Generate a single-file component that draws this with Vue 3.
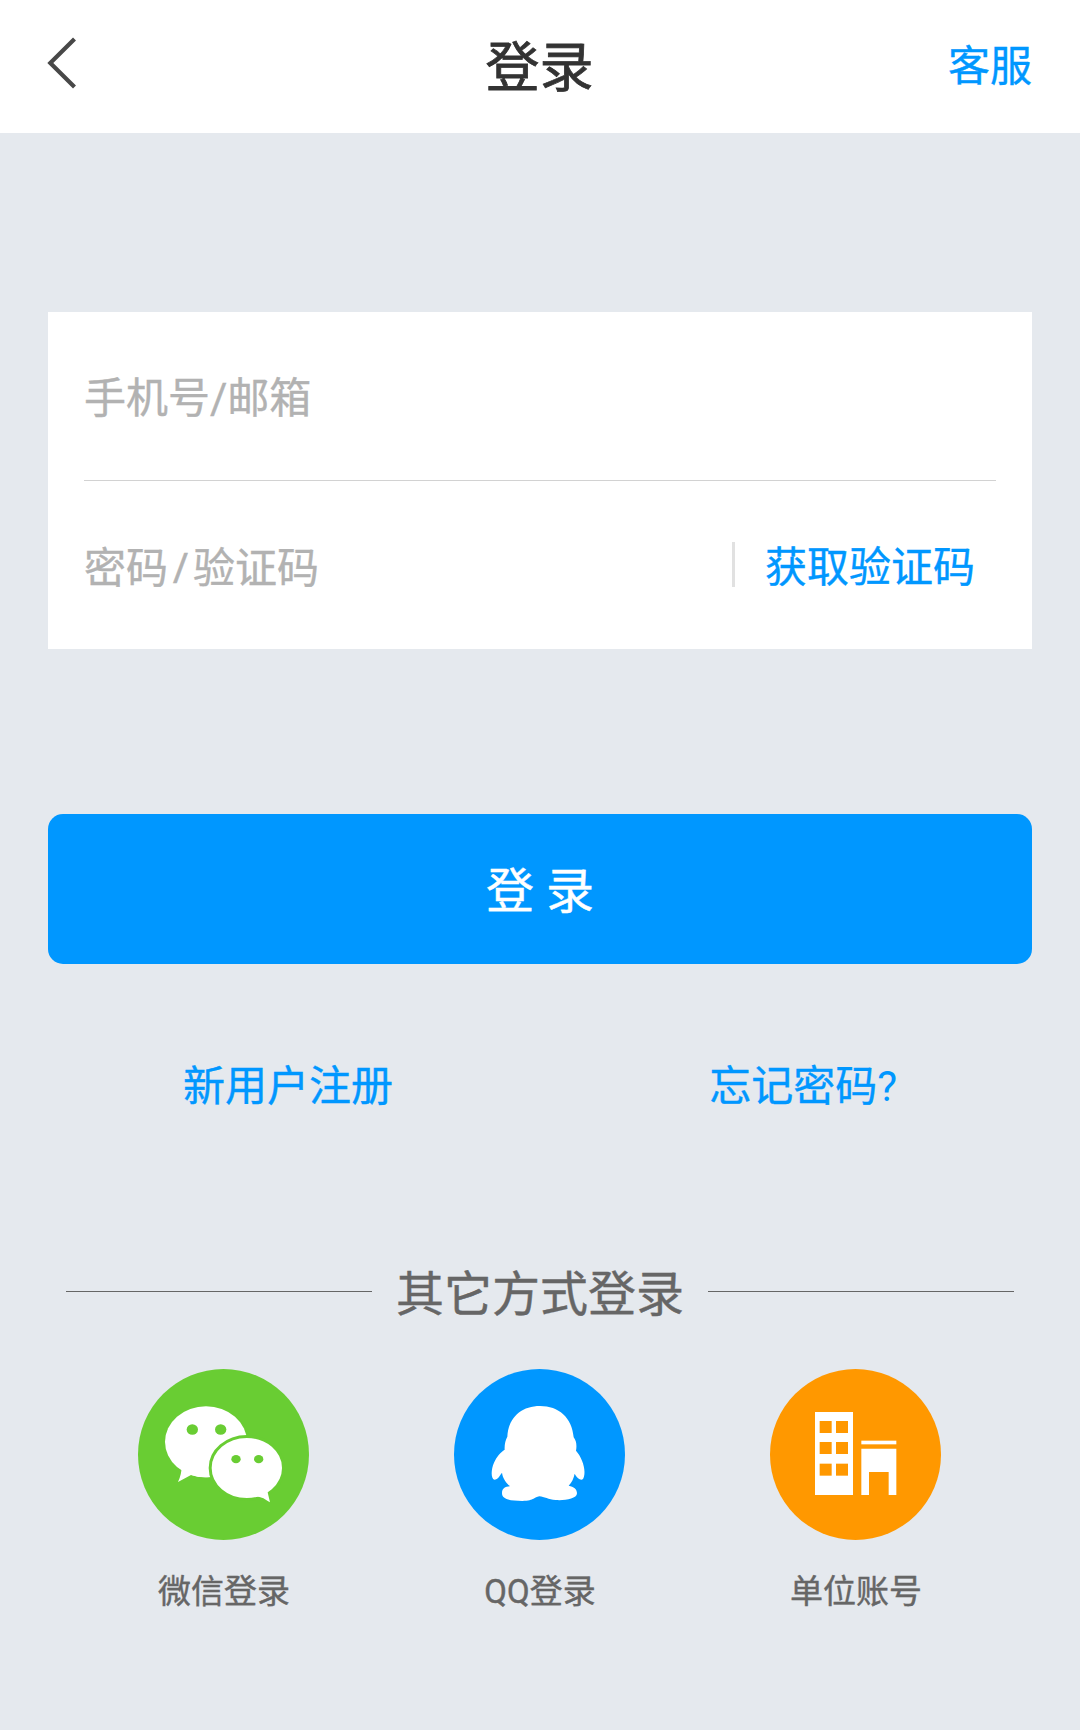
<script setup>
import { ref } from 'vue'

const account = ref('')
const password = ref('')
const windows = [213, 276, 341].flatMap((y) => [209, 258].map((x) => ({ x, y })))
</script>

<template>
  <div class="page">
    <header class="header">
      <a class="back" aria-label="返回">
        <svg width="32" height="54" viewBox="0 0 32 54">
          <path d="M27.5 3 L3.3 27 L27.5 51" fill="none" stroke="#484848" stroke-width="4.2" />
        </svg>
      </a>
      <h1 class="title">登录</h1>
      <a class="service">客服</a>
    </header>

    <main class="content">
      <form class="card" @submit.prevent>
        <label class="field">
          <span v-if="!account" class="hint">手机号/邮箱</span>
        </label>
        <div class="field code-field">
          <span v-if="!password" class="hint">密码<span class="slash">/</span>验证码</span>
          <a class="get-code"><span>获取验证码</span></a>
        </div>
      </form>

      <button class="login" type="button">登 录</button>

      <nav class="links">
        <a>新用户注册</a>
        <a>忘记密码<span class="mark">?</span></a>
      </nav>

      <section class="others">
        <div class="others-title">
          <i class="rule"></i>
          <span>其它方式登录</span>
          <i class="rule"></i>
        </div>
        <div class="methods">
          <a class="method">
            <svg class="badge" viewBox="54 57 513 513">
              <circle cx="310.5" cy="313.5" r="256.5" fill="#69cd33" />
              <g fill="#fff">
                <ellipse cx="258" cy="275.500" rx="123" ry="106.500" />
                <path d="M185 350 Q185 372 174 396 L213 375 Q240 384 270 381 L270 350 Z" />
                <ellipse cx="380.500" cy="354" rx="110" ry="94.500" stroke="#69cd33" stroke-width="9" />
                <path d="M410 440 C426 440 435 447 450 457 L442 423 Z" />
              </g>
              <g fill="#69cd33">
                <ellipse cx="217" cy="238.500" rx="17" ry="16" />
                <ellipse cx="302" cy="238.500" rx="17" ry="16" />
                <ellipse cx="348" cy="327.500" rx="14" ry="12.500" />
                <ellipse cx="416" cy="327.500" rx="14" ry="12.500" />
              </g>
            </svg>
            <span>微信登录</span>
          </a>
          <a class="method">
            <svg class="badge" viewBox="42 57 513 513">
              <circle cx="298.5" cy="313.5" r="256.5" fill="#0097ff" />
              <path
                fill="#fff"
                d="M300 168 C356 168 396 202 401 262 C409 272 411 286 408 302 C424 320 436 350 433 374 C431 388 426 392 419 388 C412 384 408 378 404 371 C401 385 396 396 386 407 C401 410 411 417 411 430 C411 447 372 452 347 450 C325 449 313 440 298 439 C282 441 285 452 247 453 C210 453 186 448 186 430 C186 415 195 410 210 409 C198 398 188 385 186 368 C180 375 174 389 163 389 C152 387 153 357 162 338 C171 318 182 307 194 299 C193 285 196 270 202 260 C205 202 245 168 300 168 Z"
              />
            </svg>
            <span>QQ登录</span>
          </a>
          <a class="method">
            <svg class="badge" viewBox="60 57 513 513">
              <circle cx="316.5" cy="313.5" r="256.5" fill="#ff9800" />
              <g fill="#fff">
                <rect x="195" y="186" width="114" height="249" />
                <rect x="334" y="272" width="105" height="11" />
                <path d="M334 296 H439 V435 H416 V366 H357 V435 H334 Z" />
              </g>
              <rect
                v-for="w in windows"
                :key="`${w.x}-${w.y}`"
                :x="w.x"
                :y="w.y"
                width="36"
                height="36"
                fill="#ff9800"
              />
            </svg>
            <span>单位账号</span>
          </a>
        </div>
      </section>
    </main>
  </div>
</template>

<style>
body {
  margin: 0;
  background: #e5e9ee;
}
</style>

<style scoped>
.page {
  width: 1080px;
  height: 1730px;
  overflow: hidden;
  background: #e5e9ee;
  font-family: Roboto, "Noto Sans CJK SC", sans-serif;
  color: #666;
  -webkit-text-stroke-width: 0.4px;
}

.header {
  display: grid;
  grid-template-columns: 1fr auto 1fr;
  align-items: center;
  box-sizing: border-box;
  height: 133px;
  padding: 0 48px 4px 47px;
  background: #fff;
}

.back {
  display: flex;
  padding-bottom: 4px;
}

.title {
  margin: 0;
  padding-top: 8px;
  font-size: 54px;
  font-weight: 400;
  line-height: 78px;
  color: #333;
  -webkit-text-stroke-width: 0.8px;
}

.service {
  justify-self: end;
  padding-top: 5px;
  font-size: 42px;
  line-height: 60px;
  color: #0097ff;
}

.content {
  display: flex;
  flex-direction: column;
  padding: 179px 48px 0;
}

.card {
  padding: 0 36px;
  background: #fff;
}

.field {
  display: flex;
  align-items: center;
  height: 168px;
  font-size: 42px;
  line-height: 60px;
}

.field:first-child {
  border-bottom: 1px solid #d2d2d2;
}

.hint {
  padding-top: 6px;
  color: #b2b2b2;
}

.slash {
  display: inline-block;
  width: 25px;
  font-family: "Open Sans", sans-serif;
  text-align: center;
}

.code-field {
  justify-content: space-between;
}

.get-code {
  display: flex;
  align-items: center;
  margin-right: 21px;
  color: #0097ff;
}

.get-code span {
  padding-top: 6px;
}

.get-code::before {
  content: "";
  width: 3px;
  height: 45px;
  margin: 0 30px 2px 0;
  background: #e1e1e1;
}

.login {
  height: 150px;
  margin-top: 165px;
  padding: 6px 0 0;
  border: 0;
  border-radius: 15px;
  background: #0097ff;
  font-family: inherit;
  font-size: 48px;
  line-height: 70px;
  color: #fff;
}

.links {
  display: flex;
  justify-content: space-between;
  margin-top: 93px;
  padding: 0 135px;
  font-size: 42px;
  line-height: 60px;
  color: #0097ff;
}

.mark {
  -webkit-text-stroke-width: 0;
}

.others {
  margin-top: 135px;
  padding: 0 18px;
}

.others-title {
  display: flex;
  align-items: center;
  gap: 24px;
  font-size: 48px;
  line-height: 70px;
}

.others-title span {
  padding-top: 8px;
}

.rule {
  flex: 1;
  height: 1px;
  background: #666;
}

.methods {
  display: flex;
  margin-top: 39px;
}

.method {
  flex: 1;
  display: flex;
  flex-direction: column;
  align-items: center;
  gap: 28px;
  font-size: 33px;
  line-height: 48px;
}

.badge {
  width: 171px;
  height: 171px;
  margin-right: 1px;
}
</style>
